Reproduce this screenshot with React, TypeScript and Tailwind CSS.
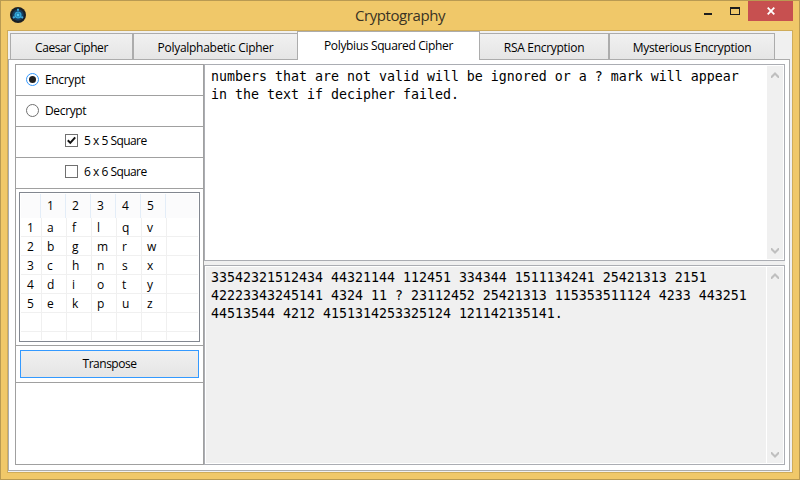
import React from 'react';

const ui = 'font-["Open_Sans","Noto_Sans",sans-serif]';

const columns = ['1', '2', '3', '4', '5'];
const square = ['aflqv', 'bgmrw', 'chnsx', 'dioty', 'ekpuz'];

const plainText = [
  'numbers that are not valid will be ignored or a ? mark will appear',
  'in the text if decipher failed.',
];
const cipherText = [
  '33542321512434 44321144 112451 334344 1511134241 25421313 2151',
  '42223343245141 4324 11 ? 23112452 25421313 115353511124 4233 443251',
  '44513544 4212 4151314253325124 121142135141.',
];

function AppIcon() {
  return (
    <svg width="16" height="16" viewBox="0 0 16 16">
      <circle cx="8" cy="8" r="8" fill="#1b1f23" />
      <circle cx="8" cy="8" r="5.8" fill="#173f60" />
      <circle cx="8" cy="8" r="3" fill="#2387b8" stroke="#35a9dc" strokeWidth="1.2" />
      <circle cx="8" cy="8" r="1.2" fill="#56c8f0" />
      <path d="M7 1.8h2v2H7zM2.4 10l1.8-1 1 1.6-1.8 1.1zM13.6 10l-1.8-1-1 1.6 1.8 1.1z" fill="#3fa9dd" />
    </svg>
  );
}

function Chevron({ down = false }: { down?: boolean }) {
  return (
    <svg width="8" height="6" viewBox="0 0 8 6" className={down ? 'rotate-180' : ''}>
      <path d="M4 0 8 4v2H7L4 3 1 6H0V4z" fill="#bfbfbf" />
    </svg>
  );
}

function ScrollBar({ divided = false }: { divided?: boolean }) {
  return (
    <div
      className={`flex shrink-0 flex-col items-center justify-between bg-[#f0f0f0] pt-[6px] pb-[5px] ${
        divided ? 'w-[17px] border-l border-white' : 'w-4'
      }`}
    >
      <Chevron />
      <Chevron down />
    </div>
  );
}

function TextPane({ lines, readOnly = false }: { lines: string[]; readOnly?: boolean }) {
  return (
    <div
      className={`flex border border-[#abadb3] bg-white p-px ${readOnly ? 'h-[200px]' : 'h-[197px]'}`}
    >
      <div
        className={`min-w-0 flex-1 pl-[5px] pt-[2px] font-["DejaVu_Sans_Mono",monospace] text-[13.29px] leading-[18px] whitespace-pre ${
          readOnly ? 'bg-[#f0f0f0]' : ''
        }`}
      >
        {lines.map((line) => (
          <div key={line}>{line}</div>
        ))}
      </div>
      <ScrollBar divided={readOnly} />
    </div>
  );
}

function Tab({ label, box }: { label: string; box: string }) {
  return (
    <div
      className={`flex h-[26px] items-center justify-center border border-b-0 border-[#acacac] bg-linear-to-b from-[#f1f1f1] to-[#e5e5e5] pt-[2px] ${box}`}
    >
      <span>{label}</span>
    </div>
  );
}

function Radio({ label, checked = false }: { label: string; checked?: boolean }) {
  return (
    <div className="flex h-[31px] items-center border-b border-[#a0a0a0] pl-[10px]">
      <span
        className={`mb-[2px] flex size-[13px] items-center justify-center rounded-full border bg-white ${
          checked ? 'border-[#3399ff]' : 'border-[#707070]'
        }`}
      >
        {checked && <span className="size-[7px] rounded-full bg-[#212121]" />}
      </span>
      <span className="ml-[6px] tracking-[-0.35px]">{label}</span>
    </div>
  );
}

function Check({ label, checked = false }: { label: string; checked?: boolean }) {
  return (
    <div className="flex h-[31px] items-center border-b border-[#a0a0a0] pl-[49px]">
      <span className="mb-[3px] flex size-[13px] items-center justify-center border border-[#707070] bg-white">
        {checked && (
          <svg width="9" height="9" viewBox="0 0 9 9">
            <path d="M.8 4.3 3.3 6.9 8.2 1.4" fill="none" stroke="#111" strokeWidth="2" />
          </svg>
        )}
      </span>
      <span className="mb-[2px] ml-[6px] tracking-[-0.58px] [word-spacing:0.2px]">{label}</span>
    </div>
  );
}

function Square() {
  return (
    <div className="h-[156px] pt-[3px] pl-[3px]">
      <div className="h-[150px] w-[181px] overflow-hidden border border-[#828790] p-px">
        <div className="flex h-6 w-[177px] bg-[#fbfbfc] leading-6">
          <span className="w-5 border-r border-[#e3edf8]" />
          {columns.map((c) => (
            <span key={c} className="w-[25px] border-r border-[#e3edf8] pl-[6px]">
              {c}
            </span>
          ))}
        </div>
        <div className="h-[122px] overflow-hidden">
          {[0, 1, 2, 3, 4, 5, 6].map((r) => (
            <div key={r} className="flex h-[19px] w-[177px] border-b border-[#f0f0f0] leading-[20px]">
              <span className="w-[21px] border-r border-[#f0f0f0] pl-[6px]">{square[r] ? r + 1 : ''}</span>
              {columns.map((c, i) => (
                <span key={c} className="w-[25px] border-r border-[#f0f0f0] pl-[5px]">
                  {square[r]?.[i]}
                </span>
              ))}
            </div>
          ))}
        </div>
      </div>
    </div>
  );
}

function TitleBar() {
  return (
    <div className="flex h-[29px] w-full">
      <div className="flex w-[200px] pt-[6px] pl-[9px]">
        <AppIcon />
      </div>
      <div className="flex flex-1 justify-center pt-[2px] text-[15px] leading-[24px] text-[#3a3324]">
        <span className="tracking-[-0.42px]">Cryptography</span>
      </div>
      <div className="flex w-[200px] justify-end pr-[6px]">
        <span className="mt-3 mr-[18px] h-[2px] w-2 bg-[#1e1e1e]" />
        <span className="mt-[6px] mr-2 h-2 w-[10px] border border-t-2 border-[#1e1e1e]" />
        <span className="flex h-5 w-[45px] items-center justify-center bg-[#c75050]">
          <svg width="8" height="8" viewBox="0 0 8 8">
            <path d="m.7.7 6.6 6.6M7.3.7.7 7.3" stroke="#fff" strokeWidth="1.8" />
          </svg>
        </span>
      </div>
    </div>
  );
}

export default function App() {
  return (
    <div
      className={`flex h-[480px] w-[800px] flex-col overflow-hidden border border-[#b99a52] bg-[#f0c869] text-[12px] leading-4 whitespace-nowrap text-black ${ui}`}
    >
      <TitleBar />
      <div className="ml-[6px] h-[443px] w-[786px] border border-[#cfac5a] bg-[#f0f0f0]">
        <div className="flex h-[28px] items-end pl-[2px]">
          <Tab label="Caesar Cipher" box="w-[123px] tracking-[-0.42px]" />
          <Tab label="Polyalphabetic Cipher" box="w-[164px] border-r-0 tracking-[-0.28px]" />
          <div className="relative z-10 -mb-px flex h-[29px] w-[183px] items-center justify-center border border-b-0 border-[#acacac] bg-white pb-px tracking-[-0.35px]">
            <span>Polybius Squared Cipher</span>
          </div>
          <Tab label="RSA Encryption" box="w-[129px] border-l-0 tracking-[-0.3px]" />
          <Tab label="Mysterious Encryption" box="w-[166px] tracking-[-0.3px]" />
        </div>
        <div className="flex h-[412px] w-[782px] border border-[#acacac] bg-white pt-1 pl-[6px]">
          <div className="h-[401px] w-[189px] border border-[#a0a0a0]">
            <Radio label="Encrypt" checked />
            <Radio label="Decrypt" />
            <Check label="5 x 5 Square" checked />
            <Check label="6 x 6 Square" />
            <Square />
            <div className="h-[38px] border-y border-[#a0a0a0] pt-1 pl-1">
              <div className="flex h-7 w-[179px] items-center justify-center border border-[#3399ff] bg-linear-to-b from-[#f0f0f0] to-[#e5e5e5]">
                <span className="tracking-[-0.5px]">Transpose</span>
              </div>
            </div>
          </div>
          <div className="flex h-[401px] w-[581px] flex-col justify-between bg-[#f0f0f0]">
            <TextPane lines={plainText} />
            <TextPane lines={cipherText} readOnly />
          </div>
        </div>
      </div>
    </div>
  );
}
